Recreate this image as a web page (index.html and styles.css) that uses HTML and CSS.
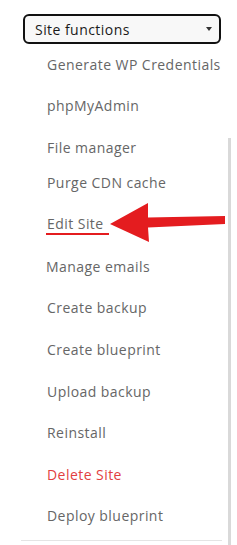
FILE: index.html
```html
<!DOCTYPE html>
<html lang="en">
<head>
  <meta charset="UTF-8" />
  <title>Site functions</title>
  <link rel="stylesheet" href="styles.css">
</head>
<body>

  <div class="panel">
    <div class="select">
      <span>Site functions</span>
      <span class="caret"></span>
    </div>

    <ul class="menu">
      <li>Generate WP Credentials</li>
      <li>phpMyAdmin</li>
      <li class="short">File manager</li>
      <li>Purge CDN cache</li>
      <li><span class="marked">Edit Site</span></li>
      <li class="nudge">Manage emails</li>
      <li>Create backup</li>
      <li>Create blueprint</li>
      <li>Upload backup</li>
      <li>Reinstall</li>
      <li class="danger">Delete Site</li>
      <li>Deploy blueprint</li>
    </ul>

    <div class="divider"></div>

    <!-- scroll track on the right -->
    <div class="track"></div>

    <!-- annotation arrow -->
    <svg class="arrow" width="120" height="42" viewBox="0 0 120 42">
      <polygon points="0,21 38,0 38,14.5 115,13 115,21 38,24.5 39,39" fill="#e41c1f"/>
    </svg>
  </div>

</body>
</html>
```

FILE: styles.css
```css
body {
  margin: 0;
  font-family: "Open Sans", sans-serif;
  background-color: #fff;
}

.panel {
  position: relative;
  height: 545px;
  padding-top: 14px;
  box-sizing: border-box;
}

.select {
  margin-left: 23px;
  width: 198px;
  height: 30px;
  box-sizing: border-box;
  border: 2px solid #111;
  border-radius: 6px;
  background-color: #f8f8f8;
  display: flex;
  justify-content: space-between;
  align-items: center;
  padding: 0 7px 0 10px;
  font-size: 14px;
  letter-spacing: 0.45px;
  color: #1a1a1a;
}

.caret {
  width: 0;
  height: 0;
  border-left: 3.5px solid transparent;
  border-right: 3.5px solid transparent;
  border-top: 4px solid #333;
}

.menu {
  list-style: none;
  margin: 0;
  padding: 0 0 0 47px;
  font-size: 14px;
  letter-spacing: 0.45px;
  color: #666;
}

.menu li {
  line-height: 20px;
  padding: 10.8px 0;
}

.menu li.short {
  padding-bottom: 3.8px;
}

.menu li.nudge {
  margin-left: -1px;
}

.menu li.danger {
  color: #e2403f;
}

.marked {
  display: inline-block;
  line-height: 18px;
  margin-left: -1px;
  padding: 0 5px 0 1px;
  border-bottom: 2px solid #e41c1f;
}

.divider {
  position: absolute;
  left: 21px;
  top: 540px;
  width: 201px;
  height: 1px;
  background-color: #e4e4e4;
}

.track {
  position: absolute;
  left: 228px;
  top: 138px;
  width: 3px;
  bottom: 0;
  background-color: #d9d9d9;
}

.arrow {
  position: absolute;
  left: 110px;
  top: 203px;
}
```
